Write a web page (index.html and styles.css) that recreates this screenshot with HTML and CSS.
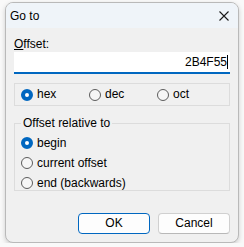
FILE: index.html
```html
<!DOCTYPE html>
<html lang="en">
<head>
    <meta charset="UTF-8">
    <title>Go to</title>
    <link rel="stylesheet" href="styles.css">
</head>
<body>
<div class="dialog">
    <div class="titlebar">
        <span class="title">Go to</span>
        <svg class="close" width="10" height="10" viewBox="0 0 10 10">
            <path d="M0.5 0.5 L9.5 9.5 M9.5 0.5 L0.5 9.5" stroke="#1a1a1a" stroke-width="1.1" fill="none"/>
        </svg>
    </div>
    <div class="content">
        <label class="lbl"><u>O</u>ffset:</label>
        <div class="edit"><span class="val">2B4F55</span><span class="caret"></span></div>
        <div class="box">
            <div class="opt w-hex"><span class="radio on"></span>hex</div>
            <div class="opt w-dec"><span class="radio"></span>dec</div>
            <div class="opt"><span class="radio"></span>oct</div>
        </div>
        <fieldset class="group">
            <legend>Offset relative to</legend>
            <div class="opt row"><span class="radio on"></span>begin</div>
            <div class="opt row"><span class="radio"></span>current offset</div>
            <div class="opt row"><span class="radio"></span>end (backwards)</div>
        </fieldset>
        <div class="buttons">
            <div class="btn default">OK</div>
            <div class="btn">Cancel</div>
        </div>
    </div>
</div>
</body>
</html>
```

FILE: styles.css
```css
*{
    margin: 0;
    padding: 0;
    box-sizing: border-box;
}
body{
    background: #f9f9f9;
    font: 12px/15px "Liberation Sans", Arial, sans-serif;
    color: #000;
}
.dialog{
    width: 234px;
    height: 241px;
    margin: 2px 0 0 5px;
    background: #f0f0f0;
    border: 1px solid #b9b9b9;
    border-radius: 8px;
    overflow: hidden;
    box-shadow: 0 2px 5px rgba(0,0,0,0.18);
}
.titlebar{
    height: 25px;
    background: #eff4f9;
    display: flex;
    align-items: center;
    justify-content: space-between;
    padding: 0 9px 0 4px;
}
.title{
    margin-top: 1px;
}
.content{
    padding: 9px 8px 0 8px;
}
.lbl{
    display: block;
    height: 15px;
}
.edit{
    height: 22px;
    background: #fff;
    border-bottom: 2px solid #0067c0;
    display: flex;
    justify-content: flex-end;
    align-items: center;
    padding-right: 2px;
}
.caret{
    width: 1px;
    height: 14px;
    background: #000;
}
.box{
    margin-top: 9px;
    height: 23px;
    border: 1px solid #dcdcdc;
    display: flex;
    align-items: center;
    padding-left: 6px;
}
.opt{
    display: flex;
    align-items: center;
}
.w-hex, .w-dec{
    width: 68px;
}
.radio{
    width: 12px;
    height: 12px;
    border-radius: 50%;
    border: 1px solid #5c5c5c;
    background: #f6f6f6;
    margin-right: 4px;
}
.radio.on{
    border: 4px solid #0067c0;
    background: #fff;
}
.group{
    margin-top: 10px;
    height: 75px;
    border: 1px solid #dcdcdc;
    padding: 2px 0 0 6px;
}
.group legend{
    padding: 0 2px;
}
.row{
    height: 20px;
}
.buttons{
    display: flex;
    justify-content: flex-end;
    gap: 8px;
    margin-top: 22px;
}
.btn{
    width: 72px;
    height: 21px;
    border: 1px solid #d0d0d0;
    border-bottom-color: #b8b8b8;
    border-radius: 4px;
    background: #fdfdfd;
    text-align: center;
    line-height: 19px;
}
.btn.default{
    border: 1px solid #0067c0;
}
```
